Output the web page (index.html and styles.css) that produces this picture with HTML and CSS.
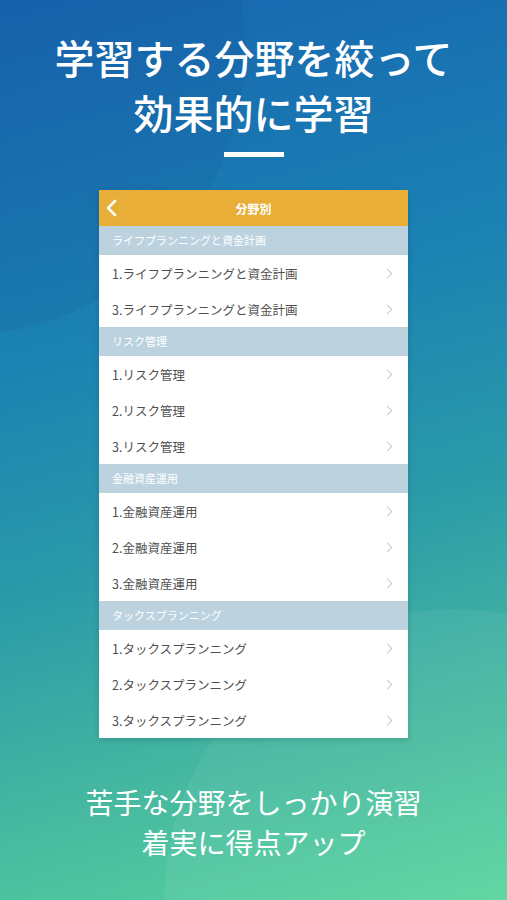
FILE: index.html
```html
<!DOCTYPE html>
<html lang="ja">

<head>
  <meta charset="UTF-8">
  <meta name="viewport" content="width=device-width, initial-scale=1.0">
  <title>分野別</title>
  <link rel="stylesheet" href="styles.css">
</head>

<body>
  <header class="hero">
    <h1>学習する分野を絞って<br>効果的に学習</h1>
    <div class="divider"></div>
  </header>

  <div class="card">
    <div class="card-bar">
      <svg class="back" width="12" height="18" viewBox="0 0 12 18">
        <path d="M10 2 L3 9 L10 16" fill="none" stroke="#fff" stroke-width="2.6" stroke-linecap="round" stroke-linejoin="round"/>
      </svg>
      <span>分野別</span>
    </div>

    <div class="section">ライフプランニングと資金計画</div>
    <div class="row"><span>1.ライフプランニングと資金計画</span><i class="chev"></i></div>
    <div class="row"><span>3.ライフプランニングと資金計画</span><i class="chev"></i></div>

    <div class="section">リスク管理</div>
    <div class="row"><span>1.リスク管理</span><i class="chev"></i></div>
    <div class="row"><span>2.リスク管理</span><i class="chev"></i></div>
    <div class="row"><span>3.リスク管理</span><i class="chev"></i></div>

    <div class="section">金融資産運用</div>
    <div class="row"><span>1.金融資産運用</span><i class="chev"></i></div>
    <div class="row"><span>2.金融資産運用</span><i class="chev"></i></div>
    <div class="row"><span>3.金融資産運用</span><i class="chev"></i></div>

    <div class="section">タックスプランニング</div>
    <div class="row"><span>1.タックスプランニング</span><i class="chev"></i></div>
    <div class="row"><span>2.タックスプランニング</span><i class="chev"></i></div>
    <div class="row"><span>3.タックスプランニング</span><i class="chev"></i></div>
  </div>

  <p class="tagline">苦手な分野をしっかり演習<br>着実に得点アップ</p>
</body>

</html>
```

FILE: styles.css
```css
/* Global Styles */
body {
  font-family: 'Noto Sans CJK JP', 'Noto Sans', sans-serif;
  margin: 0;
  height: 900px;
  overflow: hidden;
  color: #fff;
  text-align: center;
  display: flex;
  flex-direction: column;
  align-items: center;
  background:
    radial-gradient(circle at -40px 50px, rgba(10, 40, 110, 0.07) 285px, transparent 286px),
    radial-gradient(circle at 455px 900px, rgba(255, 255, 255, 0.05) 290px, transparent 291px),
    linear-gradient(165deg, #1765b0 0%, #1b82b3 35%, #2a9aa9 58%, #46b8a0 80%, #5ad59e 100%);
}

/* Header */
.hero {
  padding-top: 30px;
}

.hero h1 {
  margin: 0;
  font-size: 40px;
  line-height: 55px;
  font-weight: 500;
  letter-spacing: 0;
}

.divider {
  width: 60px;
  height: 5px;
  background: #fff;
  margin: 12px auto 0;
}

/* Phone list card */
.card {
  width: 309px;
  margin-top: 33px;
  background: #fff;
  box-shadow: 0 2px 6px rgba(0, 0, 0, 0.15);
  text-align: left;
}

.card-bar {
  height: 36px;
  background: #e8ae38;
  display: flex;
  align-items: center;
  justify-content: center;
  position: relative;
  font-size: 12px;
  font-weight: 700;
}

.card-bar .back {
  position: absolute;
  left: 6px;
  top: 9px;
}

.section {
  height: 29px;
  line-height: 29px;
  background: #bcd3df;
  padding-left: 13px;
  font-size: 11px;
  color: #fff;
}

.row {
  height: 36px;
  display: flex;
  align-items: center;
  justify-content: space-between;
  padding: 0 17px 0 13px;
  font-size: 12.5px;
  color: #505050;
}

.chev {
  width: 6px;
  height: 6px;
  border-top: 1.5px solid #c8c8cc;
  border-right: 1.5px solid #c8c8cc;
  transform: rotate(45deg);
}

/* Bottom copy */
.tagline {
  margin: 44px 0 0;
  font-size: 28px;
  line-height: 40px;
}
```
